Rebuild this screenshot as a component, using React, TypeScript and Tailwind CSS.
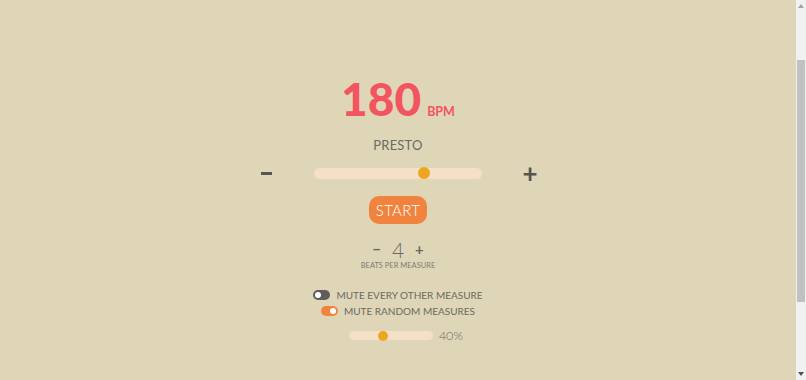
import React from "react";

export default function App() {
  return (
    <div className="flex h-[380px] overflow-hidden bg-[#dfd6b8]">
      <div
        className="flex-1 flex flex-col items-center pt-[76px] text-[#6b6963]"
        style={{ fontFamily: "Lato, 'Open Sans', sans-serif" }}
      >
        <div className="flex items-baseline">
          <span className="text-[46px] leading-none font-black text-[#f25560]">180</span>
          <span className="ml-[6px] text-[12.5px] font-bold text-[#f25560]">BPM</span>
        </div>
        <div className="mt-[17px] text-[13px] leading-none tracking-[0.2px]">PRESTO</div>
        <div className="mt-[9px] flex items-center">
          <button className="w-[24px] h-[24px] flex items-center justify-center">
            <span className="block w-[11px] h-[3px] bg-[#56554f]" aria-label="−" />
          </button>
          <div className="ml-[36px] w-[168px] h-[11px] rounded-full bg-[#f4e0c7] relative">
            <div className="absolute left-[104px] top-[-0.5px] w-[12px] h-[12px] rounded-full bg-[#efa61f]" />
          </div>
          <button className="ml-[36px] w-[24px] h-[24px] text-[26px] leading-none font-bold text-[#56554f] flex items-center justify-center">
            +
          </button>
        </div>
        <button className="mt-[11px] w-[58px] h-[28px] rounded-[10px] bg-[#f0843f] text-white text-[15px] font-light leading-none tracking-[0.3px]">
          START
        </button>
        <div className="mt-[15px] flex items-center">
          <span className="text-[15px] font-bold leading-none text-[#6b6963]">−</span>
          <span className="mx-[11px] text-[21px] font-light leading-none">4</span>
          <span className="text-[15px] font-bold leading-none text-[#6b6963]">+</span>
        </div>
        <div className="mt-[2px] text-[7.5px] leading-none text-[#7f7c71]">BEATS PER MEASURE</div>
        <div className="mt-[20px] flex items-center gap-[6px]">
          <div className="w-[17px] h-[10px] rounded-full bg-[#5e5d5a] relative">
            <div className="absolute left-[2px] top-[2px] w-[6px] h-[6px] rounded-full bg-white" />
          </div>
          <span className="text-[10px] leading-none">MUTE EVERY OTHER MEASURE</span>
        </div>
        <div className="mt-[6px] flex items-center gap-[6px]">
          <div className="w-[17px] h-[10px] rounded-full bg-[#f0843f] relative">
            <div className="absolute right-[2px] top-[2px] w-[6px] h-[6px] rounded-full bg-white" />
          </div>
          <span className="text-[10px] leading-none">MUTE RANDOM MEASURES</span>
        </div>
        <div className="mt-[14px] ml-[16px] flex items-center gap-[6px]">
          <div className="w-[84px] h-[9px] rounded-full bg-[#f4e0c7] relative">
            <div className="absolute left-[29px] top-[-0.5px] w-[10px] h-[10px] rounded-full bg-[#efa61f]" />
          </div>
          <span className="text-[12.5px] leading-none font-light">40%</span>
        </div>
      </div>
      <div className="w-[10px] h-[380px] bg-[#f1f1f1] relative flex flex-col items-center">
        <svg className="absolute top-[4px] left-[2px]" width="6" height="4" viewBox="0 0 6 4">
          <path d="M0 4 L3 0 L6 4 Z" fill="#a3a3a3" />
        </svg>
        <div className="absolute top-[60px] left-[1px] w-[8px] h-[242px] bg-[#c1c1c1]" />
        <svg className="absolute bottom-[4px] left-[2px]" width="6" height="4" viewBox="0 0 6 4">
          <path d="M0 0 L3 4 L6 0 Z" fill="#505050" />
        </svg>
      </div>
    </div>
  );
}
